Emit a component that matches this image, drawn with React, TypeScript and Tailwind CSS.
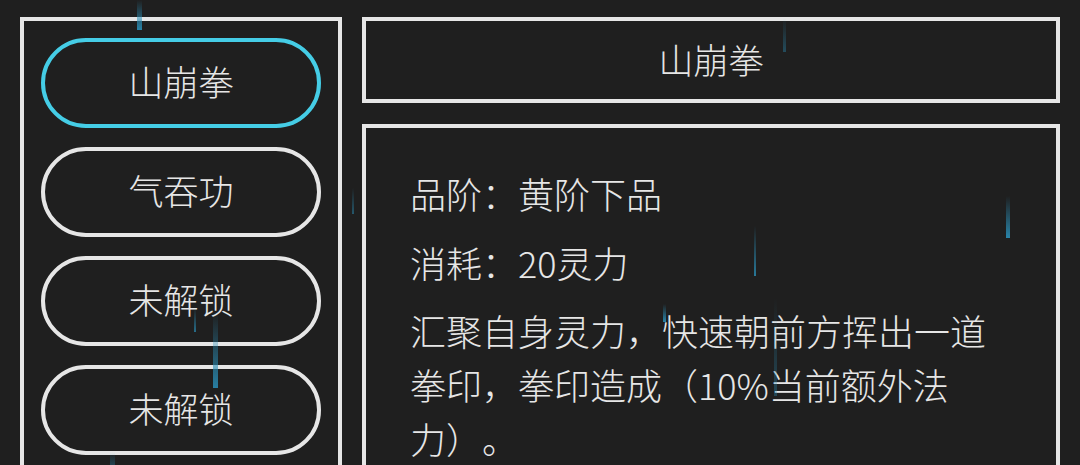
import React from "react";

const skills = [
  { name: "山崩拳", active: true },
  { name: "气吞功", active: false },
  { name: "未解锁", active: false },
  { name: "未解锁", active: false },
];

const streaks = [
  { left: 137, top: 0, height: 30, width: 5, opacity: 0.9 },
  { left: 352, top: 188, height: 26, width: 2, opacity: 0.5 },
  { left: 783, top: 18, height: 34, width: 3, opacity: 0.4 },
  { left: 1006, top: 196, height: 42, width: 4, opacity: 0.9 },
  { left: 754, top: 226, height: 50, width: 2, opacity: 0.8 },
  { left: 774, top: 298, height: 98, width: 3, opacity: 0.35 },
  { left: 663, top: 304, height: 18, width: 3, opacity: 0.9 },
  { left: 194, top: 308, height: 24, width: 2, opacity: 0.7 },
  { left: 213, top: 312, height: 76, width: 5, opacity: 0.85 },
  { left: 110, top: 452, height: 20, width: 5, opacity: 0.5 },
];

export default function App() {
  return (
    <div
      lang="zh-CN"
      className="relative h-[465px] w-[1080px] overflow-hidden bg-[#1f1f1f] font-light text-[#e6e6e6] [text-spacing-trim:space-all]"
      style={{ fontFamily: '"Noto Sans CJK SC", "Noto Sans", sans-serif' }}
    >
      <div className="flex gap-[20px] px-[20px] pt-[17px]">
        {/* skill list */}
        <div className="flex h-[470px] w-[322px] shrink-0 flex-col gap-[19px] border-[4px] border-[#e6e6e6] px-[17px] pt-[17px]">
          {skills.map((s, i) => (
            <div
              key={i}
              className={`flex h-[90px] items-center justify-center rounded-full border-[4px] pb-[3px] text-[35px] ${
                s.active ? "border-[#45cde6]" : "border-[#e6e6e6]"
              }`}
            >
              {s.name}
            </div>
          ))}
        </div>

        {/* detail */}
        <div className="flex flex-1 flex-col gap-[21px]">
          <div className="flex h-[86px] items-center justify-center border-[4px] border-[#e6e6e6] pb-[2px] text-[35px]">
            山崩拳
          </div>
          <div className="h-[400px] border-[4px] border-[#e6e6e6] pl-[44px] pr-[40px] pt-[38px] text-[36px] leading-[54px]">
            <p>品阶：黄阶下品</p>
            <p className="mt-[15px]">消耗：20灵力</p>
            <p className="mt-[14px]">
              汇聚自身灵力，快速朝前方挥出一道拳印，拳印造成（10%当前额外法力）。
            </p>
          </div>
        </div>
      </div>

      {streaks.map((r, i) => (
        <div
          key={i}
          className="pointer-events-none absolute bg-gradient-to-b from-transparent to-[#2a8fb8]"
          style={{ left: r.left, top: r.top, height: r.height, width: r.width, opacity: r.opacity }}
        />
      ))}
    </div>
  );
}
